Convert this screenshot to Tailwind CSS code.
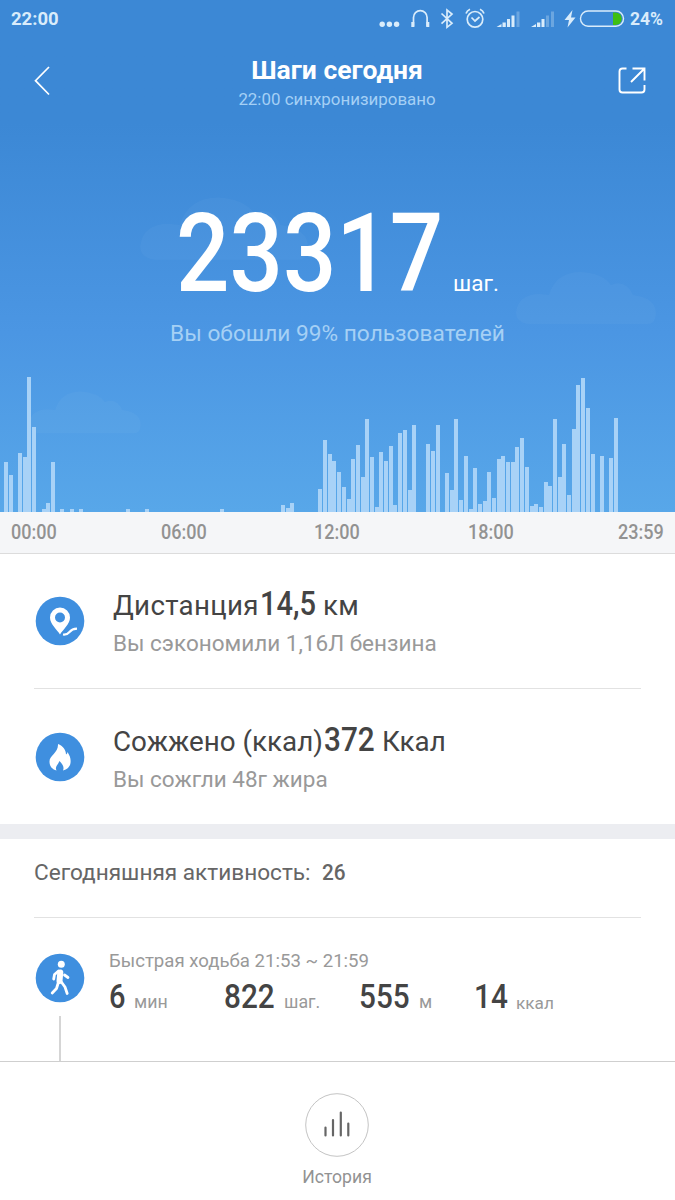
<!DOCTYPE html>
<html lang="ru">

<head>
    <meta charset="UTF-8">
    <title>Шаги сегодня</title>
    <script src="https://cdn.jsdelivr.net/npm/@tailwindcss/browser@4"></script>
</head>

<body class="bg-white w-[675px] h-[1200px] overflow-hidden font-['Roboto',sans-serif] leading-none whitespace-nowrap text-[#444]">

    <section class="relative h-[512px] bg-linear-to-b from-[#3c88d5] from-24% via-[#4b96e3] via-65% to-[#58a7e9] text-white">

        <!-- clouds -->
        <svg class="absolute inset-0" width="675" height="512" fill="#fff" fill-opacity="0.03">
            <path id="cloud" d="M528 324Q516 322 516 313Q518 294 540 294L549 295Q556 272 581 272Q602 273 611 285Q625 279 633 295Q656 298 656 314Q655 324 648 324Z" />
            <use href="#cloud" transform="translate(-479 -129) scale(1.2)" />
            <use href="#cloud" transform="translate(-384 174) scale(.8)" />
        </svg>

        <div class="relative flex justify-between h-[38px] pl-[11px] pr-3 text-[#d9ecfb]">
            <span class="pt-[10px] text-[18.5px] font-bold">22:00</span>
            <div class="flex">
                <svg width="251" height="38" fill="none" stroke="#d9ecfb" stroke-width="1.7">
                    <g fill="#d9ecfb" stroke="none">
                        <circle cx="3.2" cy="24.3" r="2.7" />
                        <circle cx="10.4" cy="24.3" r="2.7" />
                        <circle cx="17.6" cy="24.3" r="2.7" />
                    </g>
                    <path d="M34.5 26.5V17.5a6.8 6.8 0 0 1 13.6 0V26.5" />
                    <path d="M33.8 22v5M48.8 22v5" stroke-width="3" />
                    <path d="M62.5 13.5l10.5 9.8-5 4V10l5 4-10.5 9.7" />
                    <circle cx="96" cy="19.3" r="7.8" />
                    <path d="M92.5 17.5l3.5 3.5 4.5-4M87 13.5q1-3 4-4.3M105 13.5q-1-3-4-4.3" />
                    <g fill="#d9ecfb" stroke="none">
                        <path d="M117.5 27l5-3v3zM123.5 22.5h3.3V27h-3.3zM128 19h3v8h-3zM132.5 15.5h3V27h-3z" />
                        <path d="M137.5 11.5h3V27h-3z" opacity=".3" />
                        <path d="M152 27l5-3v3zM158 22.5h3.3V27H158zM162.5 19h3v8h-3z" />
                        <path d="M167 15.5h3V27h-3zM172 11.5h3V27h-3z" opacity=".3" />
                        <path d="M193.5 10l-8 10h4.5l-1.5 7.5 8-10h-4.5z" />
                    </g>
                    <path d="M234 12.500h2.500a6 6 0 0 1 0 12.500H234z" fill="#3fbf12" stroke="none" />
                    <rect x="201.5" y="11" width="43" height="15.3" rx="7.6" stroke-width="1.4" />
                </svg>
                <span class="pt-[11px] text-[17.5px] font-bold">24%</span>
            </div>
        </div>

        <div class="relative flex justify-between h-[89px]">
            <svg class="mt-7 ml-8" width="24" height="32" fill="none" stroke="#fff" stroke-width="1.7">
                <path d="M17 1L3.5 14.7 17 28.5" />
            </svg>
            <div class="pt-[19px] text-center">
                <h1 class="text-[26.5px] font-bold">Шаги сегодня</h1>
                <p class="mt-[7px] text-[16.9px] text-[#a5d0f5]">22:00 синхронизировано</p>
            </div>
            <svg class="mt-[29px] mr-7" width="29" height="30" fill="none" stroke="#fff" stroke-width="1.9">
                <path d="M8.5 1.5H4.5q-3 0-3 3v18q0 3 3 3h19q3 0 3-3v-4.5M14.5 1.5h12v12M26.5 1.5L13 15" />
            </svg>
        </div>

        <div class="relative flex items-baseline mt-[72px] ml-[176px] h-[110px]">
            <span class="w-[277px] text-[110px] font-medium"><span class="inline-block origin-left scale-x-[.855]">23317</span></span>
            <span class="text-[22.5px]">шаг.</span>
        </div>
        <p class="relative mt-[14px] text-center text-[22.7px] text-[#a5d0f5]">Вы обошли 99% пользователей</p>

        <svg id="chart" class="absolute bottom-0 left-0" width="675" height="140" fill="#a8d2f7"></svg>
    </section>

    <div class="flex justify-between h-[42px] px-[11px] pt-[10px] bg-[#f5f6f8] border-b border-[#dcdcdc] text-[20.5px] leading-[21px] font-medium text-[#929292]">
        <span class="w-[46px]"><span class="block origin-left scale-x-[.88]">00:00</span></span>
        <span class="w-[46px] ml-[-4px]"><span class="block origin-left scale-x-[.88]">06:00</span></span>
        <span class="w-[46px]"><span class="block origin-left scale-x-[.88]">12:00</span></span>
        <span class="w-[46px] mr-[-3px]"><span class="block origin-left scale-x-[.88]">18:00</span></span>
        <span class="w-[46px]"><span class="block origin-left scale-x-[.88]">23:59</span></span>
    </div>

    <section class="px-[34px]">
        <div class="flex h-[135px] border-b border-[#e2e2e2]">
            <svg class="mt-[42px] ml-px mr-7" width="50" height="50">
                <circle cx="25" cy="25" r="24.3" fill="#3f8fdf" />
                <path d="M25 38.5c-3-5-10-10.5-10-17a10 10 0 0 1 20 0c0 6.5-7 12-10 17zM25 16.5a5 5 0 1 0 0 10 5 5 0 0 0 0-10z" fill="#fff" fill-rule="evenodd" />
                <path d="M28 38.5q4 .5 6.5-2.5t7.500-3.300" fill="none" stroke="#fff" stroke-width="2.2" />
            </svg>
            <div>
                <div class="flex items-baseline h-[52px] pt-[33px] text-[27.7px] tracking-[.3px]"><span class="w-[147px]">Дистанция</span><b class="w-[63px] text-[33px] tracking-normal font-medium"><span class="inline-block origin-left scale-x-[.88]">14,5</span></b>км</div>
                <p class="mt-[26px] text-[22.5px] text-[#999]">Вы сэкономили 1,16Л бензина</p>
            </div>
        </div>
        <div class="flex h-[135px]">
            <svg class="mt-[43px] ml-px mr-7" width="50" height="50">
                <circle cx="25" cy="25" r="24.3" fill="#3f8fdf" />
                <path d="M23 12c5 2 8 6 8 10.500q1.500-1 1.500-2.500c2.500 4 3.500 7 3 11-.6 4-3.500 6.500-7.500 7.500 1.500-4-.5-6-3.500-9.500-1.500 4-5 5.500-3 9.500-4-1-7-4-7-9 0-6.500 9-8.500 8.500-17.500z" fill="#fff" />
            </svg>
            <div>
                <div class="flex items-baseline h-[52px] pt-[34px] text-[27.8px]"><span class="w-[211px]">Сожжено (ккал)</span><b class="w-[58px] text-[33px] font-medium"><span class="inline-block origin-left scale-x-[.9]">372</span></b>Ккал</div>
                <p class="mt-[27px] text-[22.5px] text-[#999]">Вы сожгли 48г жира</p>
            </div>
        </div>
    </section>

    <div class="h-[15px] bg-[#ecedf1]"></div>

    <section class="h-[223px] px-[34px] border-b border-[#cfcfcf]">
        <div class="flex h-[79px] pt-[23px] border-b border-[#e2e2e2] text-[22.6px] text-[#666]">Сегодняшняя активность:<span class="ml-[11px] font-medium origin-left scale-x-[.92]">26</span></div>
        <div class="flex">
            <div class="mt-[35px] ml-px w-[50px]">
                <svg width="50" height="50">
                    <circle cx="25" cy="25" r="24.3" fill="#3f8fdf" />
                    <circle cx="26.3" cy="11.3" r="3.5" fill="#fff" />
                    <path d="M25.3 19.5l-.8 8.5" stroke="#fff" stroke-width="6" stroke-linecap="round" />
                    <g fill="none" stroke="#fff" stroke-width="2.8" stroke-linecap="round" stroke-linejoin="round">
                        <path d="M23.5 18l-4 3.500-.8 4.500M29.500 22l3.500 2.500M23.500 29l-2 6.500-4.300 4.500M26 28.500l4 5.500 2.200 6.500" />
                    </g>
                </svg>
                <div class="mt-[13px] ml-6 h-[45px] w-[2px] bg-[#d5d5d5]"></div>
            </div>
            <div class="ml-6">
                <p class="mt-[34px] text-[18.6px] text-[#999]">Быстрая ходьба 21:53 ~ 21:59</p>
                <div class="flex items-baseline mt-[9px] text-[17.8px] text-[#999]">
                    <b class="w-[25px] text-[33px] font-medium text-[#444]"><span class="inline-block origin-left scale-x-[.88]">6</span></b><span class="w-[90px]">мин</span>
                    <b class="w-[60px] text-[33px] font-medium text-[#444]"><span class="inline-block origin-left scale-x-[.9]">822</span></b><span class="w-[75px]">шаг.</span>
                    <b class="w-[60px] text-[33px] font-medium text-[#444]"><span class="inline-block origin-left scale-x-[.9]">555</span></b><span class="w-[55px]">м</span>
                    <b class="w-[42px] text-[33px] font-medium text-[#444]"><span class="inline-block origin-left scale-x-[.9]">14</span></b><span class="relative top-px text-[17.2px]">ккал</span>
                </div>
            </div>
        </div>
    </section>

    <footer class="flex flex-col items-center pt-[31px] pr-px text-[#929292]">
        <svg width="64" height="64" fill="none">
            <circle cx="32" cy="32" r="31.3" stroke="#c4c4c4" />
            <path d="M20.5 34.5v8M28 27V42.5M35.8 19.5V42.5M43.3 30.5V42.5" stroke="#666" stroke-width="2.2" stroke-linecap="round" />
        </svg>
        <span class="mt-3 text-[17.6px]">История</span>
    </footer>

</body>

</html>


<script>

    // one value per ten minutes, starting at midnight
    var steps = [
        50, 37, 0, 59, 55, 135, 85, 0, 3, 9, 50, 0, 3, 0, 3, 0, 3, 0, 0, 0, 0, 0, 0, 0,
        0, 0, 3, 0, 0, 0, 3, 0, 0, 0, 0, 0, 0, 0, 0, 0, 0, 0, 0, 0, 0, 0, 3, 0,
        0, 0, 0, 0, 0, 0, 0, 0, 0, 0, 0, 7, 4, 9, 0, 0, 0, 0, 0, 23, 72, 58, 51, 40,
        25, 13, 53, 67, 35, 93, 55, 5, 60, 51, 66, 7, 79, 82, 22, 87, 0, 0, 68, 61, 87, 0, 39, 22,
        93, 12, 56, 3, 44, 8, 11, 40, 14, 53, 56, 50, 50, 65, 74, 45, 6, 8, 5, 30, 26, 93, 35, 68,
        17, 83, 127, 134, 104, 58, 0, 56, 0, 54, 94
    ];

    var chart = document.getElementById("chart");
    steps.forEach((height, slot) => {
        if (height === 0) return;
        var bar = document.createElementNS("http://www.w3.org/2000/svg", "rect");
        bar.setAttribute("x", Math.round(4 + slot * 4.692));
        bar.setAttribute("y", 140 - height);
        bar.setAttribute("width", 4);
        bar.setAttribute("height", height);
        chart.appendChild(bar);
    });

</script>
